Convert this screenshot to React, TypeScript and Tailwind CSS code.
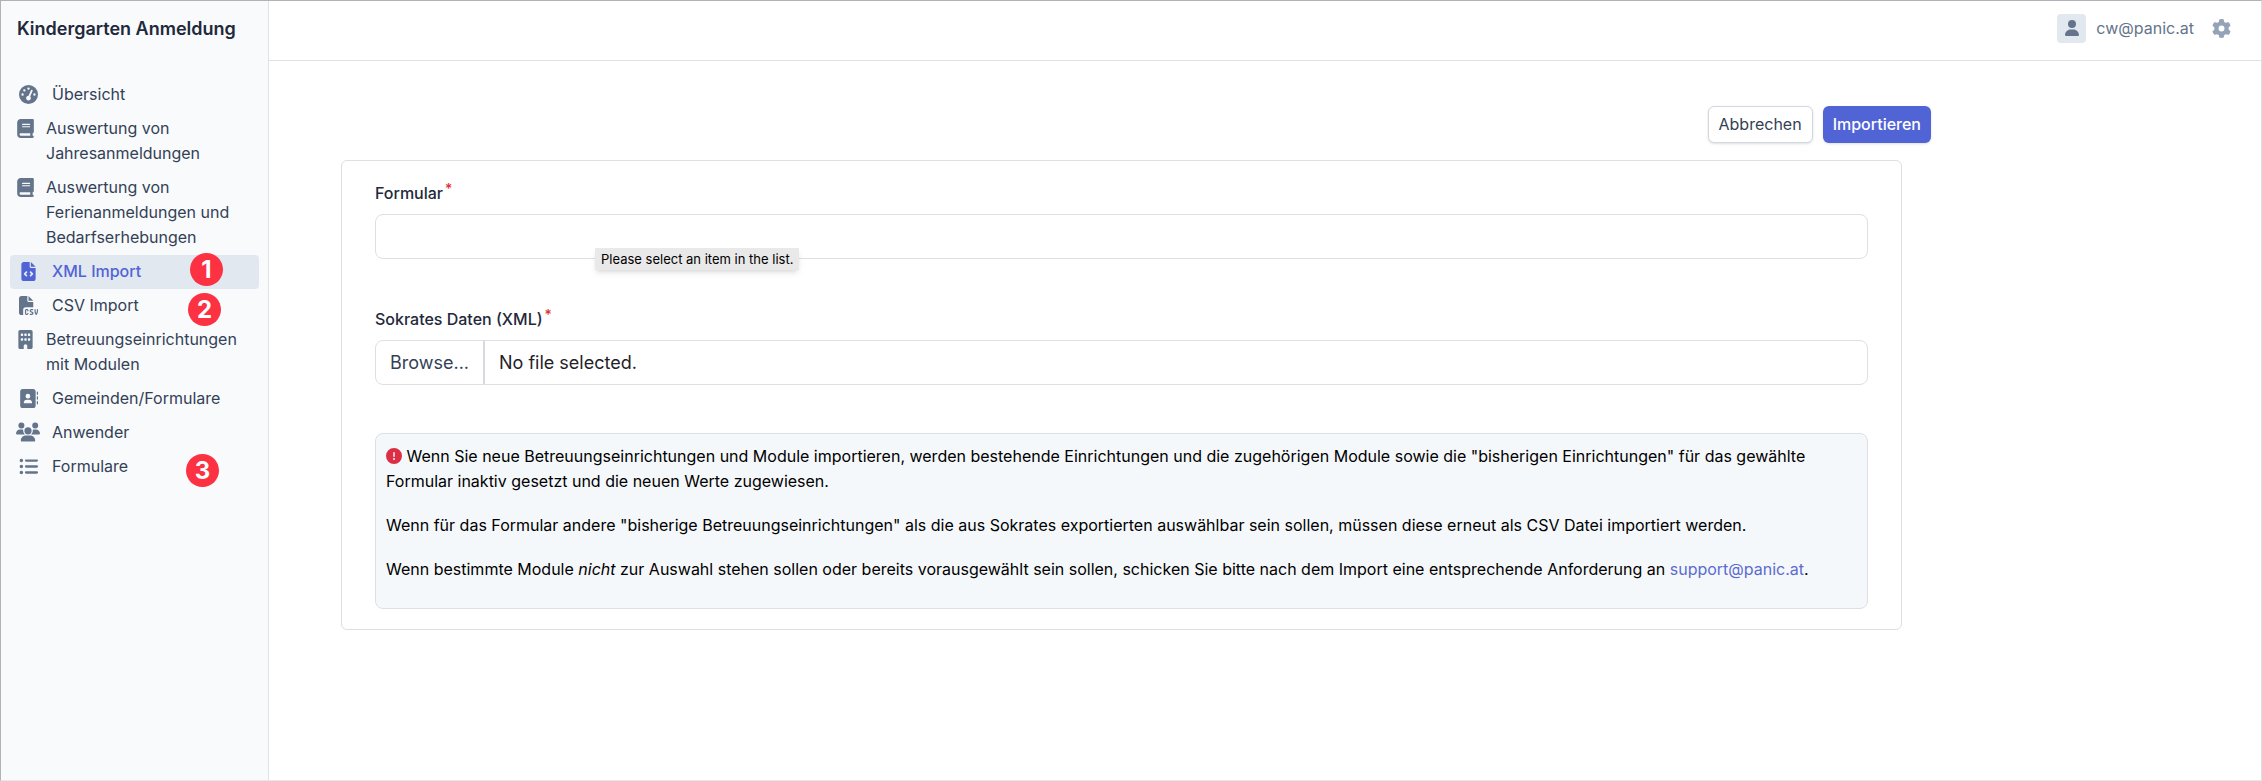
import type { ReactNode } from "react";
import type { IconType } from "react-icons";
import {
    FaAddressBook,
    FaBook,
    FaBuilding,
    FaCircleExclamation,
    FaFileCode,
    FaFileCsv,
    FaGaugeHigh,
    FaGear,
    FaListUl,
    FaUser,
    FaUsers,
} from "react-icons/fa6";

type NavItem = {
    label: string;
    icon: IconType;
    iconClass: string;
    multiline?: boolean; // long labels wrap, their icon column is narrower
    active?: boolean;
    badge?: { step: number; position: string };
};

const navItems: NavItem[] = [
    { label: "Übersicht", icon: FaGaugeHigh, iconClass: "size-[19px]" },
    { label: "Auswertung von Jahresanmeldungen", icon: FaBook, iconClass: "size-[19px]", multiline: true },
    { label: "Auswertung von Ferienanmeldungen und Bedarfserhebungen", icon: FaBook, iconClass: "size-[19px]", multiline: true },
    { label: "XML Import", icon: FaFileCode, iconClass: "size-[19px]", active: true, badge: { step: 1, position: "right-9 -top-0.5" } },
    { label: "CSV Import", icon: FaFileCsv, iconClass: "size-[19px]", badge: { step: 2, position: "right-[38px] top-1" } },
    { label: "Betreuungseinrichtungen mit Modulen", icon: FaBuilding, iconClass: "size-[19px]", multiline: true },
    { label: "Gemeinden/Formulare", icon: FaAddressBook, iconClass: "size-[19px]" },
    { label: "Anwender", icon: FaUsers, iconClass: "size-6" },
    { label: "Formulare", icon: FaListUl, iconClass: "size-[19px]", badge: { step: 3, position: "right-10 top-1" } },
];

const StepBadge = ({ step, position }: { step: number; position: string }) => (
    <span className={`absolute ${position} flex size-[33px] items-center justify-center rounded-full bg-[#fc3142] text-2xl font-bold text-white`}>
        {step}
    </span>
);

const NavLink = ({ item }: { item: NavItem }) => {
    const Icon = item.icon;
    return (
        <li>
            <a
                href="#"
                aria-current={item.active ? "page" : undefined}
                className={`relative flex items-start gap-3 rounded pt-1 pb-[5px] pl-1.5 ${item.active ? "bg-[#e2e8f0] font-medium text-[#5064d6]" : "text-[#334155]"}`}
            >
                <span className={`flex h-6 shrink-0 items-center justify-center ${item.multiline ? "w-[18px]" : "w-6"} ${item.active ? "" : "text-[#64748b]"}`}>
                    <Icon className={`shrink-0 ${item.iconClass}`} />
                </span>
                <span className="max-w-[200px]">{item.label}</span>
                {item.badge && <StepBadge {...item.badge} />}
            </a>
        </li>
    );
};

const SideBar = () => (
    <aside className="w-[268px] shrink-0 border-r border-[#dfe3e9] bg-[#f8fafc] px-[9px]">
        <h1 className="px-[7px] pt-4 text-lg leading-6 font-semibold text-[#1e293b]">Kindergarten Anmeldung</h1>
        <nav className="pt-[37px]">
            <ul>
                {navItems.map((item) => (
                    <NavLink key={item.label} item={item} />
                ))}
            </ul>
        </nav>
    </aside>
);

const FieldLabel = ({ htmlFor, children }: { htmlFor: string; children: ReactNode }) => (
    <label htmlFor={htmlFor} className="flex items-start font-medium text-[#1e293b]">
        {children}
        <span className="pl-0.5 text-sm leading-4 text-[#e03131]">*</span>
    </label>
);

const ImportForm = () => (
    <form className="mt-[17px] max-w-[1561px] rounded-md border border-[#dcdfe4] px-[33px] py-5">
        <FieldLabel htmlFor="form">Formular</FieldLabel>
        <div className="relative mt-2">
            <select id="form" className="block h-[45px] w-full appearance-none rounded-lg border border-[#dcdfe4] bg-white px-3">
                <option value=""></option>
            </select>
            <span role="tooltip" className="absolute top-[34px] left-[220px] bg-[#e9e9e9] px-1.5 py-0.5 text-[13px] leading-[18px] text-black shadow-md">
                Please select an item in the list.
            </span>
        </div>

        <div className="mt-12">
            <FieldLabel htmlFor="file">Sokrates Daten (XML)</FieldLabel>
        </div>
        <label htmlFor="file" className="relative mt-2 flex h-[45px] items-stretch rounded-lg border border-[#dcdfe4] text-lg">
            <input id="file" type="file" accept=".xml" className="sr-only" />
            <span className="flex items-center border-r-2 border-[#d6d9de] px-3.5 text-[#334155]">Browse...</span>
            <span className="flex items-center px-3.5 text-[#1f2328]">No file selected.</span>
        </label>

        <div className="mt-12 rounded-lg border border-[#dcdfe4] bg-[#f5f8fb] px-2.5 pt-2.5 pb-[26px] text-black">
            <p>
                <FaCircleExclamation className="inline size-4 align-[-2px] text-[#dc2f45]" /> Wenn Sie neue Betreuungseinrichtungen und Module importieren, werden bestehende Einrichtungen und die zugehörigen Module sowie die "bisherigen Einrichtungen" für das gewählte Formular inaktiv gesetzt und die neuen Werte zugewiesen.
            </p>
            <p className="mt-[19px]">
                Wenn für das Formular andere "bisherige Betreuungseinrichtungen" als die aus Sokrates exportierten auswählbar sein sollen, müssen diese erneut als CSV Datei importiert werden.
            </p>
            <p className="mt-[19px]">
                Wenn bestimmte Module <em>nicht</em> zur Auswahl stehen sollen oder bereits vorausgewählt sein sollen, schicken Sie bitte nach dem Import eine entsprechende Anforderung an{" "}
                <a href="mailto:support@panic.at" className="text-[#5b6bd0]">support@panic.at</a>.
            </p>
        </div>
    </form>
);

const App = () => (
    <div className="flex min-h-screen border border-t-[#b0b2b6] border-r-[#dcdee2] border-b-[#e5e7eb] border-l-[#b0b2b6] bg-white font-['Inter','Liberation_Sans',sans-serif] text-base leading-[25px]">
        <SideBar />
        <div className="min-w-0 flex-1">
            <header className="flex h-[60px] items-center justify-end border-b border-[#dfe3e9] pr-[30px] pb-[5px]">
                <span className="flex size-[29px] items-center justify-center rounded bg-[#e2e8f0] text-[#64748b]">
                    <FaUser className="size-4" />
                </span>
                <span className="pl-2.5 text-[#64748b]">cw@panic.at</span>
                <button type="button" aria-label="Einstellungen" className="ml-[18px] text-[#94a3b8]">
                    <FaGear className="size-[19px]" />
                </button>
            </header>
            <main className="pt-[45px] pr-10 pl-[72px]">
                <div className="flex max-w-[1590px] justify-end gap-2.5">
                    <button type="button" className="h-[37px] rounded-md border border-[#d3d8e0] bg-white px-2.5 text-[#334155] shadow-sm">
                        Abbrechen
                    </button>
                    <button type="button" className="h-[37px] rounded-md bg-[#5064d6] px-2.5 font-medium text-white shadow-sm">
                        Importieren
                    </button>
                </div>
                <ImportForm />
            </main>
        </div>
    </div>
);

export default App;
